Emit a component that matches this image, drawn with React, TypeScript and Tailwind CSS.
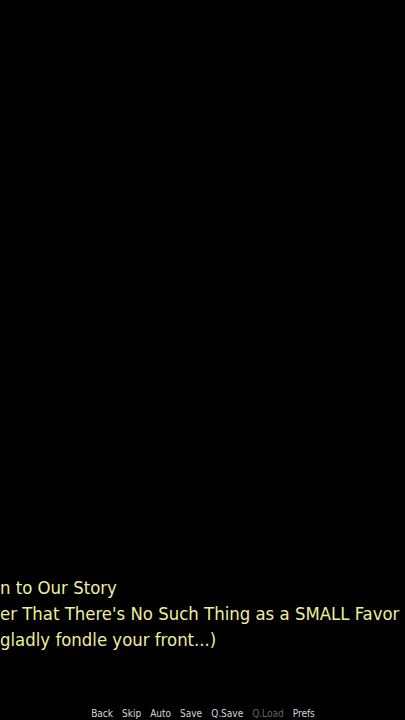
import React from 'react';

const lines = [
  'n to Our Story',
  "er That There's No Such Thing as a SMALL Favor",
  'gladly fondle your front...)',
];

const menu = [
  { label: 'Back', dim: false },
  { label: 'Skip', dim: false },
  { label: 'Auto', dim: false },
  { label: 'Save', dim: false },
  { label: 'Q.Save', dim: false },
  { label: 'Q.Load', dim: true },
  { label: 'Prefs', dim: false },
];

export default function App() {
  return (
    <div
      className="w-[405px] h-[720px] bg-black overflow-hidden flex flex-col"
      style={{ fontFamily: '"DejaVu Sans Condensed", "DejaVu Sans", sans-serif' }}
    >
      <div className="flex-1" />
      <div className="flex flex-col text-[18.4px] leading-[26px] text-[#eeee9c] whitespace-nowrap">
        {lines.map((l) => (
          <div key={l}>{l}</div>
        ))}
      </div>
      <div className="h-[55px]" />
      <div className="flex justify-center gap-[9px] text-[10px] leading-[12px] pl-[1px] text-[#d8d8d8]">
        {menu.map((m) => (
          <span key={m.label} className={m.dim ? 'text-[#666666]' : ''}>{m.label}</span>
        ))}
      </div>
    </div>
  );
}
